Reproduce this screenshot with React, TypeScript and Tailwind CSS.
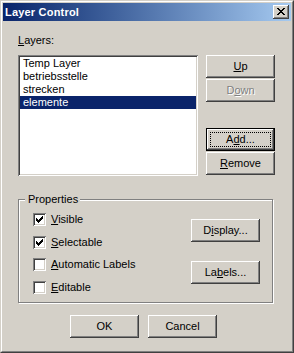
import React from "react";

const raised =
  "shadow-[inset_-1px_-1px_0_#404040,inset_1px_1px_0_#ffffff,inset_-2px_-2px_0_#808080,inset_2px_2px_0_#d4d0c8]";
const sunken =
  "shadow-[inset_1px_1px_0_#808080,inset_-1px_-1px_0_#ffffff,inset_2px_2px_0_#404040,inset_-2px_-2px_0_#d4d0c8]";

function Btn({
  children,
  isDefault,
  disabled,
  className = "",
}: {
  children: React.ReactNode;
  isDefault?: boolean;
  disabled?: boolean;
  className?: string;
}) {
  return (
    <div
      className={`relative w-[69px] h-[23px] flex items-center justify-center bg-[#d4d0c8] ${raised} ${
        isDefault ? "border border-black" : ""
      } ${disabled ? "text-[#808080] [text-shadow:1px_1px_0_#ffffff]" : "text-black"} ${className}`}
    >
      {isDefault && (
        <div className="absolute inset-[3px] border border-dotted border-black" />
      )}
      <span className="relative">{children}</span>
    </div>
  );
}

function Check() {
  return (
    <svg width="7" height="7" viewBox="0 0 7 7" shapeRendering="crispEdges">
      <path
        fill="#000"
        d="M6 0h1v1h-1z M5 1h2v1h-2z M0 2h1v1h-1z M4 2h3v1h-3z M0 3h2v1h-2z M3 3h3v1h-3z M0 4h5v1h-5z M1 5h3v1h-3z M2 6h1v1h-1z"
      />
    </svg>
  );
}

function CheckBox({
  checked,
  label,
  className = "",
}: {
  checked?: boolean;
  label: React.ReactNode;
  className?: string;
}) {
  return (
    <div className={`flex items-center h-[13px] ${className}`}>
      <div className={`w-[13px] h-[13px] bg-white p-[3px] ${sunken}`}>
        {checked && <Check />}
      </div>
      <span className="ml-[5px]">{label}</span>
    </div>
  );
}

export default function App() {
  const items = ["Temp Layer", "betriebsstelle", "strecken", "elemente"];
  return (
    <div className="w-[294px] h-[353px] bg-[#d4d0c8] border border-t-[#d4d0c8] border-l-[#d4d0c8] border-r-[#404040] border-b-[#404040] font-['Liberation_Sans',Arial,sans-serif] text-[11px] leading-[13px] text-black select-none">
      <div className="h-full border border-t-white border-l-white border-r-[#808080] border-b-[#808080] p-px flex flex-col">
        {/* Title bar */}
        <div className="h-[18px] flex items-center bg-linear-to-r from-[#0a246a] to-[#a6caf0] pl-[2px] pr-[2px]">
          <span className="text-white font-bold text-[11px] leading-[13px] tracking-[0.2px]">
            Layer Control
          </span>
          <div
            className={`ml-auto w-[16px] h-[14px] bg-[#d4d0c8] ${raised} pl-[4px] pt-[3px]`}
          >
            <svg width="8" height="7" viewBox="0 0 8 7" shapeRendering="crispEdges" className="block">
              <path
                fill="#000"
                d="M0 0h2v1h-2z M6 0h2v1h-2z M1 1h2v1h-2z M5 1h2v1h-2z M2 2h4v1h-4z M3 3h2v1h-2z M2 4h4v1h-4z M1 5h2v1h-2z M5 5h2v1h-2z M0 6h2v1h-2z M6 6h2v1h-2z"
              />
            </svg>
          </div>
        </div>

        {/* Body */}
        <div className="flex-1 pl-[15px] pt-[13px]">
          <div className="h-[13px]">
            <span className="underline">L</span>ayers:
          </div>
          <div className="mt-[8px] flex">
            <div className={`w-[180px] h-[121px] bg-white p-[2px] ${sunken}`}>
              {items.map((it, i) => (
                <div
                  key={it}
                  className={`h-[13px] pl-[3px] ${
                    i === 3 ? "bg-[#0a246a] text-white" : "text-black"
                  }`}
                >
                  {it}
                </div>
              ))}
            </div>
            <div className="ml-[8px] flex flex-col">
              <Btn>
                <span className="underline">U</span>p
              </Btn>
              <Btn disabled className="mt-[1px]">
                D<span className="underline">o</span>wn
              </Btn>
              <Btn isDefault className="mt-[26px]">
                A<span className="underline">d</span>d...
              </Btn>
              <Btn className="mt-[1px]">
                <span className="underline">R</span>emove
              </Btn>
            </div>
          </div>

          {/* Properties group */}
          <div className="relative mt-[23px] w-[255px] h-[104px] border border-[#808080] shadow-[1px_1px_0_#ffffff,inset_1px_1px_0_#ffffff] flex justify-between pl-[14px] pr-[12px]">
            <div className="absolute left-[6px] top-[-7px] bg-[#d4d0c8] pl-[3px] pr-[2px] h-[13px]">
              Properties
            </div>
            <div className="flex flex-col pt-[13px]">
              <CheckBox
                checked
                label={
                  <>
                    <span className="underline">V</span>isible
                  </>
                }
              />
              <CheckBox
                checked
                className="mt-[10px]"
                label={
                  <>
                    <span className="underline">S</span>electable
                  </>
                }
              />
              <CheckBox
                className="mt-[9px]"
                label={
                  <>
                    <span className="underline">A</span>utomatic Labels
                  </>
                }
              />
              <CheckBox
                className="mt-[10px]"
                label={
                  <>
                    <span className="underline">E</span>ditable
                  </>
                }
              />
            </div>
            <div className="flex flex-col pt-[19px]">
              <Btn>
                D<span className="underline">i</span>splay...
              </Btn>
              <Btn className="mt-[19px]">
                La<span className="underline">b</span>els...
              </Btn>
            </div>
          </div>

          {/* Bottom buttons */}
          <div className="mt-[12px] ml-[52px] flex gap-[9px]">
            <Btn>OK</Btn>
            <Btn>Cancel</Btn>
          </div>
        </div>
      </div>
    </div>
  );
}
